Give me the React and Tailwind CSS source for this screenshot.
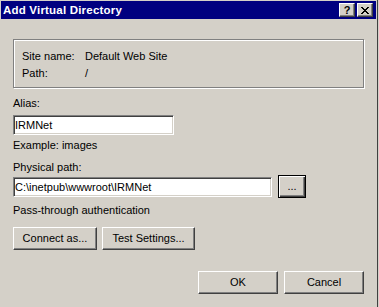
const raised =
  "box-border border border-t-white border-l-white border-r-[#404040] border-b-[#404040] shadow-[inset_-1px_-1px_0_#808080] bg-[#d4d0c8] flex items-center justify-center text-black";

const sunken =
  "box-border border border-t-[#808080] border-l-[#808080] border-r-white border-b-white shadow-[inset_1px_1px_0_#404040,inset_-1px_-1px_0_#d4d0c8] bg-white pl-[1px] leading-[18px] text-black whitespace-nowrap overflow-hidden";

const CloseGlyph = () => (
  <svg width="8" height="7" viewBox="0 0 8 7" shapeRendering="crispEdges">
    <g fill="#000">
      <rect x="0" y="0" width="2" height="1" />
      <rect x="6" y="0" width="2" height="1" />
      <rect x="1" y="1" width="2" height="1" />
      <rect x="5" y="1" width="2" height="1" />
      <rect x="2" y="2" width="4" height="1" />
      <rect x="3" y="3" width="2" height="1" />
      <rect x="2" y="4" width="4" height="1" />
      <rect x="1" y="5" width="2" height="1" />
      <rect x="5" y="5" width="2" height="1" />
      <rect x="0" y="6" width="2" height="1" />
      <rect x="6" y="6" width="2" height="1" />
    </g>
  </svg>
);

export default function App() {
  return (
    <div className="w-[379px] h-[307px] bg-[#d4d0c8] flex overflow-hidden font-['Liberation_Sans',Arial,sans-serif] text-[11px] leading-[13px] text-black select-none">
      <div className="w-[378px] h-full border-r border-r-[#404040] flex flex-col pt-[1px]">
        {/* Title bar */}
        <div className="ml-[1px] w-[375px] h-[18px] bg-[#000080] flex items-center pl-[2px] pr-[3px]">
          <span className="text-white font-bold text-[11.5px] leading-[18px] tracking-[0.2px]">
            Add Virtual Directory
          </span>
          <div className="ml-auto flex gap-[2px]">
            <div className={`${raised} w-[16px] h-[14px] font-bold text-[11px] leading-[12px]`}>?</div>
            <div className={`${raised} w-[16px] h-[14px]`}>
              <CloseGlyph />
            </div>
          </div>
        </div>

        <div className="flex flex-col px-[13px]">
          {/* Group box */}
          <div className="mt-[20px] h-[49px] box-border border border-[#808080] shadow-[inset_1px_1px_0_#fff,1px_1px_0_#fff] pt-[10px] pl-[8px] flex flex-col gap-[4px]">
            <div className="flex">
              <span className="w-[63px]">Site name:</span>
              <span>Default Web Site</span>
            </div>
            <div className="flex">
              <span className="w-[63px]">Path:</span>
              <span>/</span>
            </div>
          </div>

          <div className="mt-[9px]">Alias:</div>
          <div className={`${sunken} mt-[5px] w-[161px] h-[20px]`}>IRMNet</div>
          <div className="mt-[4px]">Example: images</div>

          <div className="mt-[9px]">Physical path:</div>
          <div className="mt-[1px] flex items-center h-[23px]">
            <div className={`${sunken} w-[259px] h-[20px]`}>C:\inetpub\wwwroot\IRMNet</div>
            <div className="ml-[6px] w-[28px] h-[23px] box-border border border-black shadow-[inset_1px_1px_0_#fff,inset_-1px_-1px_0_#404040,inset_-2px_-2px_0_#808080] bg-[#d4d0c8] flex items-center justify-center leading-[13px]">
              ...
            </div>
          </div>
          <div className="mt-[6px]">Pass-through authentication</div>

          <div className="mt-[10px] flex gap-[5px]">
            <div className={`${raised} w-[84px] h-[23px]`}>Connect as...</div>
            <div className={`${raised} w-[93px] h-[23px]`}>Test Settings...</div>
          </div>

          <div className="mt-[21px] flex justify-end gap-[6px]">
            <div className={`${raised} w-[80px] h-[23px]`}>OK</div>
            <div className={`${raised} w-[80px] h-[23px]`}>Cancel</div>
          </div>
        </div>
      </div>
    </div>
  );
}
